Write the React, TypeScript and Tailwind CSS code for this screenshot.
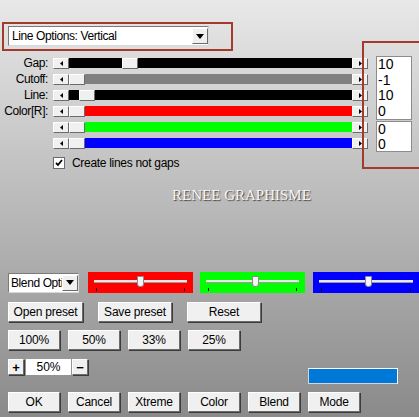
import React from "react";

const sliders = [
  { label: "Gap:", track: "bg-black", before: 53 },
  { label: "Cutoff:", track: "bg-[#808080]", before: 0 },
  { label: "Line:", track: "bg-black", before: 10 },
  { label: "Color[R]:", track: "bg-[#ff0000]", before: 0 },
  { label: "", track: "bg-[#00ff00]", before: 0 },
  { label: "", track: "bg-[#0000ff]", before: 0 },
];

const bevel =
  "bg-[#f0f0f0] border border-t-white border-l-white border-r-[#6b6b6b] border-b-[#6b6b6b] shadow-[1px_1px_0_#3c3c3c]";

const Arrow = ({ dir }: { dir: "left" | "right" | "down" }) => {
  if (dir === "down")
    return (
      <svg width="8" height="5" viewBox="0 0 8 5">
        <path d="M0 0h8L4 5z" fill="#000" />
      </svg>
    );
  return (
    <svg width="3" height="5" viewBox="0 0 3 5">
      <path d={dir === "left" ? "M3 0v5L0 2.5z" : "M0 0v5l3-2.5z"} fill="#000" />
    </svg>
  );
};

const SmallBtn = ({ dir }: { dir: "left" | "right" }) => (
  <div className={`w-4 h-[11px] flex items-center justify-center ${bevel} shadow-none`}>
    <Arrow dir={dir} />
  </div>
);

const Button = ({ label, w }: { label: string; w: string }) => (
  <div className={`${w} h-5 flex items-center justify-center text-[12px] tracking-[-0.2px] text-black ${bevel}`}>
    {label}
  </div>
);

const ColorSlider = ({ bg, w, thumb }: { bg: string; w: string; thumb: number }) => (
  <div className={`${w} h-[21px] ${bg} flex flex-col px-[6px] pt-[5px]`}>
    <div className="flex items-center h-[9px]">
      <div className="h-[3px] bg-[#e8e8e8] border-b border-[#9a9a9a]" style={{ width: thumb }} />
      <div className="w-[7px] h-[11px] bg-[#f4f4f4] border border-[#8a8a8a] rounded-b-[3px]" />
      <div className="h-[3px] flex-1 bg-[#e8e8e8] border-b border-[#9a9a9a]" />
    </div>
    <div className="flex justify-between px-[2px] mt-[2px]">
      <div className="w-px h-[3px] bg-black" />
      <div className="w-px h-[3px] bg-black" />
    </div>
  </div>
);

export default function App() {
  return (
    <div className="relative w-[419px] h-[417px] overflow-hidden bg-linear-to-b from-[#e8e8e8] via-[#b9b9b9] to-[#8a8a8a] font-['Liberation_Sans',sans-serif] text-black pt-[22px]">
      {/* top dropdown with annotation */}
      <div className="ml-[2px] w-[231px] h-[29px] border-2 border-[#a33b2d] pl-[4px] pt-[2px]">
        <div className="w-[201px] h-[20px] bg-white border border-t-[#7a7a7a] border-l-[#7a7a7a] border-r-[#d8d8d8] border-b-[#d8d8d8] flex items-center pl-[3px]">
          <span className="flex-1 text-[12px] tracking-[-0.4px] leading-none">Line Options: Vertical</span>
          <div className={`w-4 h-4 flex items-center justify-center ${bevel} shadow-none`}>
            <Arrow dir="down" />
          </div>
        </div>
      </div>

      {/* sliders + values */}
      <div className="flex items-start mt-[4px] h-[96px]">
        <div className="flex flex-col">
          {sliders.map((s, i) => (
            <div key={i} className="h-4 flex items-center">
              <div className="w-[49px] text-right text-[12px] tracking-[-0.4px] leading-none pr-[1px]">{s.label}</div>
              <div className="ml-[4px] w-[315px] flex items-center">
                <SmallBtn dir="left" />
                <div className={`h-[10px] ${s.track}`} style={{ width: s.before }} />
                <div className={`w-4 h-[11px] ${bevel} shadow-none`} />
                <div className={`h-[10px] flex-1 ${s.track}`} />
                <SmallBtn dir="right" />
              </div>
            </div>
          ))}
        </div>
        <div className="ml-[8px] mt-[1px] flex flex-col">
          <div className="w-[36px] h-[64px] bg-white border border-[#8c8c8c] flex flex-col text-[14px] leading-[15.5px] pl-[1px] overflow-hidden">
            <span>10</span>
            <span>-1</span>
            <span>10</span>
            <span>0</span>
          </div>
          <div className="w-[36px] h-[31px] mt-[1px] bg-white border border-[#8c8c8c] flex flex-col text-[14px] leading-[14.5px] pl-[1px] overflow-hidden">
            <span>0</span>
            <span>0</span>
          </div>
        </div>
      </div>

      {/* checkbox */}
      <div className="flex items-center ml-[53px] mt-[6px] h-[12px]">
        <div className="w-[12px] h-[12px] bg-white border border-[#6b6b6b] flex items-center justify-center">
          <svg width="8" height="8" viewBox="0 0 8 8">
            <path d="M1 4l2 2 4-5" stroke="#000" strokeWidth="1.8" fill="none" />
          </svg>
        </div>
        <span className="ml-[7px] text-[12px] tracking-[-0.3px] leading-none">Create lines not gaps</span>
      </div>

      {/* watermark */}
      <div className="flex justify-center pl-[64px] mt-[18px] h-4">
        <span className="font-['Liberation_Serif',serif] text-[15px] leading-4 text-[#f6f6f6] [text-shadow:1px_1px_1px_#444]">
          RENEE GRAPHISME
        </span>
      </div>

      {/* blend row */}
      <div className="flex items-center mt-[69px] ml-[8px] h-[21px]">
        <div className="w-[74px] h-[20px] bg-white border border-t-[#7a7a7a] border-l-[#7a7a7a] border-r-[#d8d8d8] border-b-[#d8d8d8] flex items-center pl-[2px] overflow-hidden">
          <span className="flex-1 text-[12px] tracking-[-0.4px] leading-none whitespace-nowrap overflow-hidden">Blend Options</span>
          <div className={`w-4 h-4 shrink-0 flex items-center justify-center ${bevel} shadow-none`}>
            <Arrow dir="down" />
          </div>
        </div>
        <div className="ml-[9px]">
          <ColorSlider bg="bg-[#ff0000]" w="w-[105px]" thumb={43} />
        </div>
        <div className="ml-[7px]">
          <ColorSlider bg="bg-[#00ff00]" w="w-[105px]" thumb={46} />
        </div>
        <div className="ml-[8px]">
          <ColorSlider bg="bg-[#0000ff]" w="w-[106px]" thumb={46} />
        </div>
      </div>

      {/* presets */}
      <div className="flex ml-[8px] mt-[9px] gap-[15px]">
        <Button label="Open preset" w="w-[75px]" />
        <Button label="Save preset" w="w-[74px]" />
        <Button label="Reset" w="w-[74px]" />
      </div>

      {/* percents */}
      <div className="flex ml-[8px] mt-[8px] gap-[8px]">
        {["100%", "50%", "33%", "25%"].map((p) => (
          <Button key={p} label={p} w="w-[52px]" />
        ))}
      </div>

      {/* zoom row */}
      <div className="flex items-start ml-[8px] mt-[9px]">
        <div className={`w-4 h-[16px] flex items-center justify-center text-[13px] font-bold leading-none ${bevel}`}>+</div>
        <div className="ml-[2px] w-[45px] h-[16px] bg-white flex items-center justify-center text-[12px] leading-none">50%</div>
        <div className={`ml-[1px] w-4 h-[16px] flex items-center justify-center text-[13px] font-bold leading-none ${bevel}`}>−</div>
        <div className="ml-[220px] mt-[9px] w-[90px] h-[16px] bg-[#0078d7] border border-t-white border-r-white border-l-[#cfd8e0] border-b-[#cfd8e0]" />
      </div>

      {/* bottom buttons */}
      <div className="flex ml-[8px] mt-[8px] gap-[8px]">
        {["OK", "Cancel", "Xtreme", "Color", "Blend", "Mode"].map((b) => (
          <Button key={b} label={b} w="w-[52px]" />
        ))}
      </div>

      {/* annotation box on values */}
      <div className="absolute left-[362px] top-[41px] w-[70px] h-[128px] border-2 border-[#a33b2d]" />
    </div>
  );
}
